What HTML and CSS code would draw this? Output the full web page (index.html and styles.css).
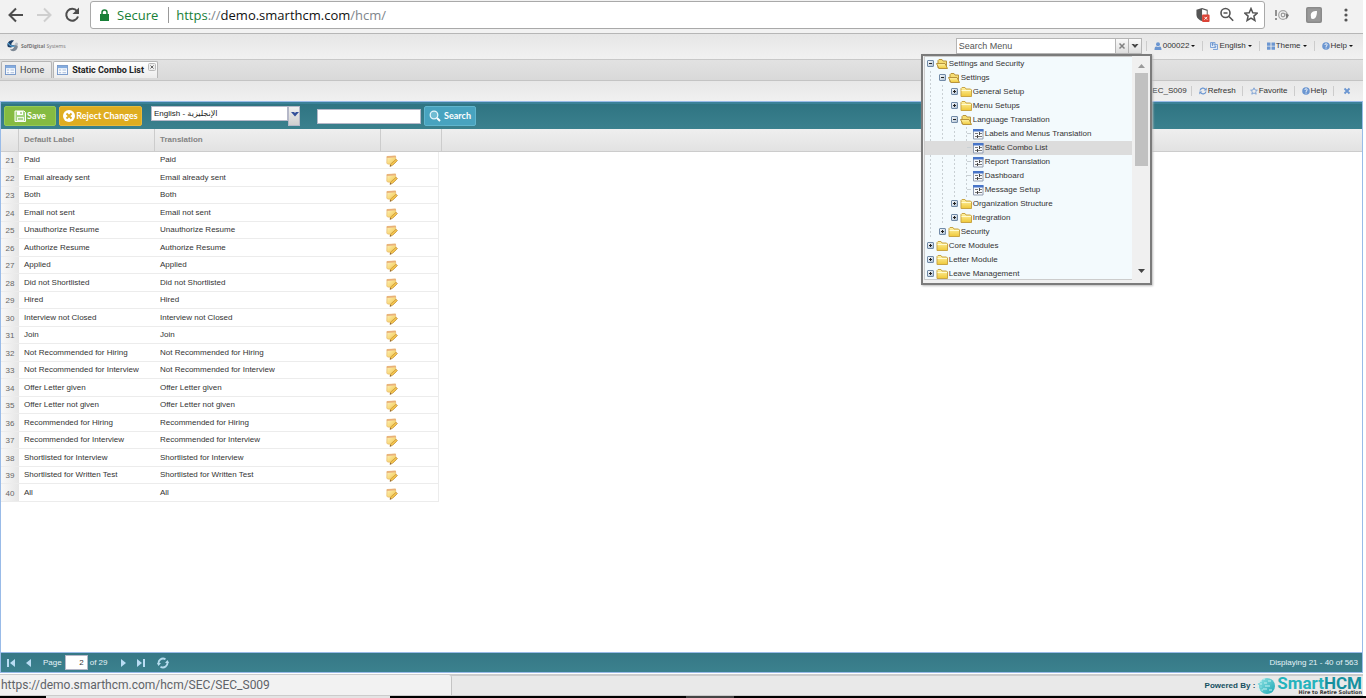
FILE: index.html
```html
<!DOCTYPE html>
<html lang="en">
<head>
<meta charset="utf-8">
<title>SmartHCM - Static Combo List</title>
<link rel="stylesheet" href="styles.css">
</head>
<body>
<svg class="sprite" aria-hidden="true">
  <defs>
    <linearGradient id="g-note" x1="0" y1="0" x2="1" y2="1"><stop offset="0" stop-color="#fdf3c0"/><stop offset="1" stop-color="#f4c645"/></linearGradient>
    <linearGradient id="g-folder" x1="0" y1="0" x2="0" y2="1"><stop offset="0" stop-color="#fff3a8"/><stop offset="1" stop-color="#efc838"/></linearGradient>
    <linearGradient id="g-toggle" x1="0" y1="0" x2="1" y2="1"><stop offset="0" stop-color="#fff"/><stop offset="1" stop-color="#a9bccf"/></linearGradient>
    <linearGradient id="g-globe" x1="0" y1="0" x2="1" y2="1"><stop offset="0" stop-color="#8fe3e3"/><stop offset="1" stop-color="#1aa5b4"/></linearGradient>
  </defs>
  <symbol id="edit" viewBox="0 0 12 12"><path d="M1 1.500 9.500 1 10 7 7 9.500 1.500 9 .8 8Z" fill="url(#g-note)" stroke="#e8b866" stroke-width=".7"/><path d="M.8 1.300 9.700 .8V2.300L.8 3Z" fill="#e9b07a"/><path d="M4 11.300 4.700 9 10 4.300 11.500 5.500 6.500 10.300Z" fill="#f5c64c" stroke="#b98534" stroke-width=".6"/><path d="M3.800 11.500 4.300 10 5.600 11Z" fill="#7a5525"/></symbol>
  <symbol id="folder" viewBox="0 0 12 12"><path d="M1 10.500V2.500L2 1.500H5L6 3H10.500L11.500 4V10.500Z" fill="url(#g-folder)" stroke="#c9a544"/><path d="M1.500 4.500H11" stroke="#fffbd0"/></symbol>
  <symbol id="folder-open" viewBox="0 0 12 12"><path d="M2 10V2.500L3 1.500H6L7 3H10.500V10Z" fill="#f5dc72" stroke="#b8943c"/><path d="M.5 5.500H9L11.500 10.500H3Z" fill="url(#g-folder)" stroke="#b8943c"/></symbol>
  <symbol id="leaf" viewBox="0 0 12 12"><path d="M1.500 1.500H11V11H1.500Z" fill="#f7f9fc" stroke="#8f9bb0"/><path d="M1 1H11.500V3.500H1Z" fill="#4774c8"/><path d="M3 5.500H6M7 5.500H10M3 8.500H5M6 8.500H10" stroke="#777"/><path d="M7.500 4V7M5.500 7V10" stroke="#444"/></symbol>
  <symbol id="minus" viewBox="0 0 9 9"><rect x="1.500" y="1.500" width="6" height="6" rx=".5" fill="url(#g-toggle)" stroke="#718aa7"/><path d="M3 4.500H6" stroke="#222"/></symbol>
  <symbol id="plus" viewBox="0 0 9 9"><rect x="1.500" y="1.500" width="6" height="6" rx=".5" fill="url(#g-toggle)" stroke="#718aa7"/><path d="M3 4.500H6M4.500 3V6" stroke="#222"/></symbol>
  <symbol id="window" viewBox="0 0 12 11"><rect x=".5" y=".5" width="11" height="10" fill="#f8fbff" stroke="#7295c9"/><path d="M1 1H11V3.500H1Z" fill="#84acdf"/><path d="M2 5.500H4.500M2 8.500H4.500M6 5.500H10M6 8.500H10" stroke="#9fb4d4"/></symbol>
  <symbol id="help" viewBox="0 0 8 8"><circle cx="4" cy="4" r="3.800" fill="#6b96d1"/><path d="M2.800 3C2.900 1.400 5.400 1.500 5.200 3 5.100 3.800 4 3.800 4 4.900M4 5.600V6.500" fill="none" stroke="#fff"/></symbol>
</svg>

<header class="browser">
  <button class="nav" aria-label="Back"><svg viewBox="0 0 16 16"><path d="M15 8H2M8 1.500 1.500 8 8 14.500" fill="none" stroke="#4d4d4d" stroke-width="2"/></svg></button>
  <button class="nav" aria-label="Forward"><svg viewBox="0 0 16 16"><path d="M1 8H14M8 1.500 14.500 8 8 14.500" fill="none" stroke="#cfcfcf" stroke-width="2"/></svg></button>
  <button class="nav" aria-label="Reload"><svg viewBox="0 0 16 16"><path d="M13 4A6 6 0 1 0 14 9.500" fill="none" stroke="#4d4d4d" stroke-width="2"/><path d="M15 .5V7H8.500Z" fill="#4d4d4d"/></svg></button>
  <div class="address">
    <svg class="lock" viewBox="0 0 9 12"><path d="M0 5H9V12H0Z" fill="#188038"/><path d="M2 6V3.500C2 .3 7 .3 7 3.500V6" fill="none" stroke="#188038" stroke-width="1.500"/></svg>
    <span class="secure">Secure</span>
    <span class="url"><span class="scheme">https</span>://<span class="host">demo.smarthcm.com</span>/hcm/</span>
    <span class="address-icons">
      <svg viewBox="0 0 14 16"><path d="M6 1 12 3V8C12 12 9 14 6 15 3 14 0 12 0 8V3Z" fill="#555"/><path d="M6 2.500 11 4V8C11 11 9 13 6 14Z" fill="#fff"/><rect x="6" y="8" width="8" height="8" rx="1" fill="#db4437"/><path d="M8.500 10.500 11.500 13.500M11.500 10.500 8.500 13.500" stroke="#fff"/></svg>
      <svg viewBox="0 0 14 14"><circle cx="5.500" cy="5.500" r="4.500" fill="none" stroke="#555" stroke-width="1.600"/><path d="M3.500 5.500H7.500M9 9 13.200 13.200" stroke="#555" stroke-width="1.600"/></svg>
      <svg viewBox="0 0 14 14"><path d="M7 1 8.800 5.200 13.300 5.600 9.900 8.600 10.900 13 7 10.600 3.100 13 4.100 8.600 .7 5.600 5.200 5.200Z" fill="none" stroke="#555" stroke-width="1.500"/></svg>
    </span>
  </div>
  <div class="extensions">
    <svg viewBox="0 0 16 16"><path d="M2 3V9M2 11V13" stroke="#888" stroke-width="1.800"/><circle cx="9" cy="8" r="4.300" fill="none" stroke="#a5a5a5" stroke-width="1.200"/><circle cx="9" cy="8" r="1.800" fill="none" stroke="#999" stroke-width="1.200"/><path d="M11.500 6 15 8 12.500 12.500Z" fill="#777"/></svg>
    <svg viewBox="0 0 16 16"><rect width="16" height="16" rx="2" fill="#8a8a8a"/><rect x="1.500" y="1.500" width="13" height="13" rx="1" fill="#999"/><path d="M5 10C4 5 7 4 11 4 11 8 10 12 7 12 5 12 5 11 5 10Z" fill="#fff"/></svg>
    <svg viewBox="0 0 16 16"><circle cx="8" cy="3" r="1.600" fill="#555"/><circle cx="8" cy="8" r="1.600" fill="#555"/><circle cx="8" cy="13" r="1.600" fill="#555"/></svg>
  </div>
</header>

<div class="app-header">
  <a class="brand" href="#"><svg viewBox="0 0 12 12"><path d="M7 .5C2-.5-1 4 1 7 4 8 7 7 7 5 4 6 3 4 7 .5Z" fill="#1d3e66"/><path d="M3 9C5 10 8 8 7 5 10 4 12 6 10 9 8 12 4 12 3 9Z" fill="#7d8894"/><path d="M1 3C3 6 5 7 8 6" fill="none" stroke="#539fd0" stroke-width="1.300"/><circle cx="9.500" cy="4" r="1.500" fill="#b8bfc8"/></svg><span><b>SofDigital</b> Systems</span></a>
  <div class="combo">
    <input class="combo-input" type="text" aria-label="Search Menu" placeholder="Search Menu">
    <button aria-label="Clear"><svg viewBox="0 0 10 10"><path d="M2.500 2.500 7.500 7.500M7.500 2.500 2.500 7.500" stroke="#808080" stroke-width="1.500"/></svg></button>
    <button aria-label="Open menu"><svg viewBox="0 0 10 10"><path d="M1.500 3H4L5 4 6 3H8.500L5 7Z" fill="#444"/></svg></button>
    <div class="popup">
      <nav class="tree">
        <ul>
          <li><a href="#"><svg class="tog"><use href="#minus"/></svg><svg class="ico"><use href="#folder-open"/></svg>Settings and Security</a>
            <ul>
              <li><a href="#"><svg class="tog"><use href="#minus"/></svg><svg class="ico"><use href="#folder-open"/></svg>Settings</a>
                <ul>
                  <li><a href="#"><svg class="tog"><use href="#plus"/></svg><svg class="ico"><use href="#folder"/></svg>General Setup</a></li>
                  <li><a href="#"><svg class="tog"><use href="#plus"/></svg><svg class="ico"><use href="#folder"/></svg>Menu Setups</a></li>
                  <li><a href="#"><svg class="tog"><use href="#minus"/></svg><svg class="ico"><use href="#folder-open"/></svg>Language Translation</a>
                    <ul>
                      <li><a href="#"><span class="branch"></span><svg class="ico"><use href="#leaf"/></svg>Labels and Menus Translation</a></li>
                      <li><a class="selected" href="#"><span class="branch"></span><svg class="ico"><use href="#leaf"/></svg>Static Combo List</a></li>
                      <li><a href="#"><span class="branch"></span><svg class="ico"><use href="#leaf"/></svg>Report Translation</a></li>
                      <li><a href="#"><span class="branch"></span><svg class="ico"><use href="#leaf"/></svg>Dashboard</a></li>
                      <li><a href="#"><span class="branch"></span><svg class="ico"><use href="#leaf"/></svg>Message Setup</a></li>
                    </ul>
                  </li>
                  <li><a href="#"><svg class="tog"><use href="#plus"/></svg><svg class="ico"><use href="#folder"/></svg>Organization Structure</a></li>
                  <li><a href="#"><svg class="tog"><use href="#plus"/></svg><svg class="ico"><use href="#folder"/></svg>Integration</a></li>
                </ul>
              </li>
              <li><a href="#"><svg class="tog"><use href="#plus"/></svg><svg class="ico"><use href="#folder"/></svg>Security</a></li>
            </ul>
          </li>
          <li><a href="#"><svg class="tog"><use href="#plus"/></svg><svg class="ico"><use href="#folder"/></svg>Core Modules</a></li>
          <li><a href="#"><svg class="tog"><use href="#plus"/></svg><svg class="ico"><use href="#folder"/></svg>Letter Module</a></li>
          <li><a href="#"><svg class="tog"><use href="#plus"/></svg><svg class="ico"><use href="#folder"/></svg>Leave Management</a></li>
        </ul>
      </nav>
      <div class="scrollbar" aria-hidden="true">
        <svg viewBox="0 0 13 16"><path d="M3 11 6.500 7 10 11Z" fill="#9a9a9a"/></svg>
        <span class="thumb"></span>
        <svg class="down" viewBox="0 0 13 16"><path d="M3 5 6.500 9 10 5Z" fill="#444"/></svg>
      </div>
    </div>
  </div>
  <div class="links">
    <button class="caret"><svg viewBox="0 0 8 8"><circle cx="4" cy="2.200" r="2" fill="#6b96d1"/><path d="M.5 8C.5 4 2 4 4 5 6 4 7.500 4 7.500 8Z" fill="#6b96d1"/></svg>000022</button>
    <button class="caret"><svg viewBox="0 0 8 8"><path d="M.5.500H5V5.500H.5ZM4 2.500H7.500V7.500H3" fill="#dce8f7" stroke="#7fa5d8"/><path d="M1.500 2H4M2.500 1V4M5 6 6 4" stroke="#557fbc" stroke-width=".7"/></svg>English</button>
    <button class="caret"><svg viewBox="0 0 8 8"><path d="M0 .5H3.500V3.700H0ZM4.500 .5H8V3.700H4.500ZM0 4.500H3.500V7.700H0ZM4.500 4.500H8V7.700H4.500Z" fill="#6b96d1"/></svg>Theme</button>
    <button class="caret"><svg><use href="#help"/></svg>Help</button>
  </div>
</div>

<nav class="tabs">
  <a class="tab" href="#"><svg><use href="#window"/></svg>Home</a>
  <a class="tab active" href="#"><svg><use href="#window"/></svg>Static Combo List<svg class="close" viewBox="0 0 8 8"><rect x=".5" y=".5" width="7" height="7" rx="1" fill="#eee" stroke="#bbb"/><path d="M2.500 2.500 5.500 5.500M5.500 2.500 2.500 5.500" stroke="#666"/></svg></a>
</nav>

<div class="page-tools links">
  <span>SEC_S009</span>
  <button><svg viewBox="0 0 8 8"><path d="M1 3.500A3 3 0 0 1 6.500 2.500M7 4.500A3 3 0 0 1 1.500 5.500" fill="none" stroke="#6b96d1" stroke-width="1.200"/><path d="M7.700 .5V3.500H4.700ZM.3 7.500V4.500H3.300Z" fill="#6b96d1"/></svg>Refresh</button>
  <button><svg viewBox="0 0 8 8"><path d="M4 .8 5 3 7.400 3.200 5.600 4.800 6.200 7.200 4 6 1.800 7.200 2.400 4.800 .6 3.200 3 3Z" fill="none" stroke="#6b96d1" stroke-width=".8"/></svg>Favorite</button>
  <button><svg><use href="#help"/></svg>Help</button>
  <button class="shut" aria-label="Close"><svg viewBox="0 0 8 8"><path d="M1.500 1.500 6.500 6.500M6.500 1.500 1.500 6.500" stroke="#6b96d1" stroke-width="1.800"/></svg></button>
</div>

<main class="panel">
  <div class="toolbar">
    <button class="btn save"><svg viewBox="0 0 12 12"><path d="M1 1H10L11.500 2.500V11.500H1Z" fill="#a4d67f" stroke="#fff"/><path d="M3 1H9V5H3Z" fill="#fff"/><path d="M3 7H10V11.500H3Z" fill="#eef9e6"/><path d="M7 2V4M4 9H9" stroke="#6cab43"/></svg>Save</button>
    <button class="btn reject"><svg viewBox="0 0 12 12"><circle cx="6" cy="6" r="6" fill="#fff"/><path d="M3.500 3.500 8.500 8.500M8.500 3.500 3.500 8.500" stroke="#dfad20" stroke-width="1.800"/></svg>Reject Changes</button>
    <div class="lang">
      <select aria-label="Language"><option>English - الإنجليزية</option></select>
      <span class="lang-arrow"><svg viewBox="0 0 8 6"><path d="M0 0H3L4 1 5 0H8L4 4.500Z" fill="#34509a"/></svg></span>
    </div>
    <input class="query" type="text" aria-label="Search text">
    <button class="btn search"><svg viewBox="0 0 12 12"><circle cx="5" cy="5" r="3.800" fill="#70bcd2" stroke="#e5f6fb" stroke-width="1.300"/><path d="M8 8 11 11" stroke="#fff" stroke-width="2"/></svg>Search</button>
  </div>

  <div class="grid">
    <table>
      <thead><tr><th class="num"></th><th class="text">Default Label</th><th class="wide">Translation</th><th class="act"></th><th></th></tr></thead>
      <tbody>
        <tr><td>21</td><td>Paid</td><td>Paid</td><td><svg><use href="#edit"/></svg></td></tr>
        <tr><td>22</td><td>Email already sent</td><td>Email already sent</td><td><svg><use href="#edit"/></svg></td></tr>
        <tr><td>23</td><td>Both</td><td>Both</td><td><svg><use href="#edit"/></svg></td></tr>
        <tr><td>24</td><td>Email not sent</td><td>Email not sent</td><td><svg><use href="#edit"/></svg></td></tr>
        <tr><td>25</td><td>Unauthorize Resume</td><td>Unauthorize Resume</td><td><svg><use href="#edit"/></svg></td></tr>
        <tr><td>26</td><td>Authorize Resume</td><td>Authorize Resume</td><td><svg><use href="#edit"/></svg></td></tr>
        <tr><td>27</td><td>Applied</td><td>Applied</td><td><svg><use href="#edit"/></svg></td></tr>
        <tr><td>28</td><td>Did not Shortlisted</td><td>Did not Shortlisted</td><td><svg><use href="#edit"/></svg></td></tr>
        <tr><td>29</td><td>Hired</td><td>Hired</td><td><svg><use href="#edit"/></svg></td></tr>
        <tr><td>30</td><td>Interview not Closed</td><td>Interview not Closed</td><td><svg><use href="#edit"/></svg></td></tr>
        <tr><td>31</td><td>Join</td><td>Join</td><td><svg><use href="#edit"/></svg></td></tr>
        <tr><td>32</td><td>Not Recommended for Hiring</td><td>Not Recommended for Hiring</td><td><svg><use href="#edit"/></svg></td></tr>
        <tr><td>33</td><td>Not Recommended for Interview</td><td>Not Recommended for Interview</td><td><svg><use href="#edit"/></svg></td></tr>
        <tr><td>34</td><td>Offer Letter given</td><td>Offer Letter given</td><td><svg><use href="#edit"/></svg></td></tr>
        <tr><td>35</td><td>Offer Letter not given</td><td>Offer Letter not given</td><td><svg><use href="#edit"/></svg></td></tr>
        <tr><td>36</td><td>Recommended for Hiring</td><td>Recommended for Hiring</td><td><svg><use href="#edit"/></svg></td></tr>
        <tr><td>37</td><td>Recommended for Interview</td><td>Recommended for Interview</td><td><svg><use href="#edit"/></svg></td></tr>
        <tr><td>38</td><td>Shortlisted for Interview</td><td>Shortlisted for Interview</td><td><svg><use href="#edit"/></svg></td></tr>
        <tr><td>39</td><td>Shortlisted for Written Test</td><td>Shortlisted for Written Test</td><td><svg><use href="#edit"/></svg></td></tr>
        <tr><td>40</td><td>All</td><td>All</td><td><svg><use href="#edit"/></svg></td></tr>
      </tbody>
    </table>
  </div>

  <div class="pager">
    <button aria-label="First page"><svg viewBox="0 0 10 10"><path d="M1 1H3V9H1ZM9 1V9L4 5Z" fill="#b9dcf3"/></svg></button>
    <button aria-label="Previous page"><svg viewBox="0 0 10 10"><path d="M7 1V9L2 5Z" fill="#b9dcf3"/></svg></button>
    <label class="page-box">Page <input type="text" value="2"></label>
    <span>of 29</span>
    <button class="next" aria-label="Next page"><svg viewBox="0 0 10 10"><path d="M3 1V9L8 5Z" fill="#b9dcf3"/></svg></button>
    <button aria-label="Last page"><svg viewBox="0 0 10 10"><path d="M7 1H9V9H7ZM1 1V9L6 5Z" fill="#b9dcf3"/></svg></button>
    <button class="reload" aria-label="Reload grid"><svg viewBox="0 0 12 12"><path d="M1.800 7.500A4.500 4.500 0 0 1 8.500 2.300M10.200 4.500A4.500 4.500 0 0 1 3.500 9.700" fill="none" stroke="#b5dcee" stroke-width="1.800"/><path d="M8 6H12L10.500 3ZM4 6H0L1.500 9Z" fill="#b5dcee"/></svg></button>
    <span class="total">Displaying 21 - 40 of 563</span>
  </div>
</main>

<footer class="footer">
  <div class="status">https://demo.smarthcm.com/hcm/SEC/SEC_S009</div>
  <div class="powered">Powered By :
    <svg viewBox="0 0 18 18"><circle cx="10" cy="9" r="8" fill="url(#g-globe)"/><path d="M1 4H5M0 7H5M0 10H5M1 13H6M7 1V3M7 6H10M11 4H14M8 9H13M6 12H10M12 13H15" stroke="#c5f2f2" stroke-width="1.200"/><path d="M1 7H3M2 10H5M3 13H5" stroke="#55c8cf"/></svg>
    <span class="logo"><span class="name">Smart<b>HCM</b></span><span class="tagline">Hire to Retire Solution</span></span>
  </div>
</footer>
<div class="taskbar"><span class="light"></span><span class="dark"></span><span class="mid"></span></div>
</body>
</html>
```

FILE: styles.css
```css
* { box-sizing: border-box; }
body {
  margin: 0;
  height: 100vh;
  padding-right: 3px;
  display: flex;
  flex-direction: column;
  font: 8px/12px "Liberation Sans", Arial, sans-serif;
  color: #333;
  background: #fff;
}
.sprite { position: absolute; width: 0; height: 0; }
svg { display: block; flex: none; }
button { border: 0; padding: 0; background: none; font: inherit; color: inherit; }
input { font: inherit; color: inherit; border-radius: 0; }
a { color: inherit; text-decoration: none; }
ul { list-style: none; margin: 0; padding: 0; }

/* Browser bar */
.browser {
  display: flex;
  align-items: center;
  gap: 12px;
  height: 34px;
  padding: 0 9px 4px 8px;
  background: #f2f2f2;
  border-bottom: 1px solid #b6b6b6;
  flex: none;
}
.nav svg { width: 16px; height: 16px; }
.address {
  flex: 1;
  display: flex;
  align-items: center;
  height: 28px;
  margin: 0 -3px 0 -2px;
  padding: 0 6px 0 9px;
  border: 1px solid #a9a9a9;
  border-radius: 3px;
  background: #fff;
  font: 13px/24px "Open Sans", "Noto Sans", sans-serif;
}
.lock { width: 9px; height: 12px; margin-right: 8px; }
.secure { color: #188038; padding-right: 10px; margin-right: 7px; line-height: 16px; border-right: 1px solid #999; }
.url { color: #80868b; }
.scheme { color: #188038; }
.host { color: #111; }
.address-icons { margin-left: auto; display: flex; align-items: center; gap: 10px; }
.address-icons svg { width: 14px; height: 15px; }
.extensions { display: flex; gap: 16px; }
.extensions svg { width: 16px; height: 16px; }

/* Application header */
.app-header {
  display: flex;
  align-items: center;
  height: 26px;
  padding: 0 3px 2px 7px;
  background: linear-gradient(#e6e6e6, #f1f1f1);
  border-bottom: 1px solid #c8c8c8;
  flex: none;
}
.brand { display: flex; align-items: center; gap: 2px; margin-right: auto; font: 5px/12px "Open Sans", sans-serif; color: #777; }
.brand svg { width: 12px; height: 12px; }
.combo { position: relative; display: flex; width: 186px; height: 16px; margin-right: 4px; }
.combo-input { flex: 1; min-width: 0; border: 1px solid #b5b5b5; padding: 0 2px; font-size: 9px; background: #fff; }
.combo-input::placeholder { color: #555; opacity: 1; }
.combo button { width: 13px; display: grid; place-items: center; background: linear-gradient(#fafafa, #dedede); border: 1px solid #b5b5b5; border-left: 0; }
.combo button svg { width: 10px; height: 10px; }

.links { display: flex; align-items: center; color: #333; }
.links button { display: flex; align-items: center; height: 10px; gap: 1px; padding: 0 6px 0 7px; border-left: 1px solid #ccc; line-height: 10px; }
.links .caret { padding-right: 7px; }
.links svg { width: 8px; height: 8px; }
.caret::after { content: ""; margin-left: 1px; border: 2px solid transparent; border-top-color: #111; border-bottom: 0; }

/* Menu tree popup */
.popup {
  position: absolute;
  z-index: 5;
  left: -35px;
  top: 16px;
  width: 231px;
  height: 231px;
  display: flex;
  padding: 0 2px 3px 1px;
  border: 2px solid #7b7b7b;
  background: #f0f0f0;
  box-shadow: 1px 1px 2px #bbb;
}
.tree { flex: 1; overflow: hidden; border: 1px solid #ccc; border-right: 0; background: #f3fafd; margin-right: 3px; }
.tree a { display: flex; align-items: center; height: 14px; padding-left: 1px; line-height: 14px; white-space: nowrap; }
.tog { width: 9px; height: 9px; margin-right: 1px; }
.ico { width: 12px; height: 12px; margin-right: 1px; }
.branch { width: 10px; height: 1px; background: linear-gradient(90deg, transparent 5px, #c9d0d4 5px 9px, transparent 9px); }
.tree ul ul { background: repeating-linear-gradient(#c9d0d4 0 2px, transparent 2px 4px) 5px 0 / 1px 100% no-repeat; }
.tree ul ul a { padding-left: 13px; }
.tree ul ul ul { background-position-x: 17px; }
.tree ul ul ul a { padding-left: 25px; }
.tree ul ul ul ul { background: repeating-linear-gradient(#c9d0d4 0 2px, transparent 2px 4px) 29px 0 / 1px 100% no-repeat, repeating-linear-gradient(#c9d0d4 0 2px, transparent 2px 4px) 41px 0 / 1px 100% no-repeat; }
.tree ul ul ul ul a { padding-left: 37px; }
.tree .selected { background: #dcdcdc; }
.scrollbar { width: 13px; display: flex; flex-direction: column; padding-top: 1px; }
.scrollbar svg { width: 13px; height: 16px; }
.thumb { height: 93px; background: #c1c1c1; }
.scrollbar .down { margin-top: auto; }

/* Tabs */
.tabs { display: flex; gap: 1px; height: 21px; padding: 1px 0 2px 1px; background: linear-gradient(#e2e2e2, #d9d9d9); border-bottom: 1px solid #c4c4c4; flex: none; }
.tab { display: flex; align-items: center; gap: 4px; padding: 0 7px 0 3px; border: 1px solid #b5b5b5; border-bottom: 0; border-radius: 2px 2px 0 0; background: linear-gradient(#eee, #e2e2e2); font: 9px/14px Roboto, "Noto Sans", sans-serif; color: #444; }
.tab svg { width: 11px; height: 10px; }
.tab.active { background: linear-gradient(#fff, #ececec); color: #222; font-weight: 700; padding-right: 1px; }
.tab .close { width: 8px; height: 8px; align-self: flex-start; margin-top: 1px; }
.page-tools { height: 20px; justify-content: flex-end; padding-right: 6px; background: linear-gradient(#e8e8e8, #f0f0f0); flex: none; }
.page-tools span { padding-right: 4px; }
.page-tools .shut { padding-left: 9px; }

/* Grid panel */
.panel { flex: 1; min-height: 0; display: flex; flex-direction: column; border: 1px solid #99bbe8; background: #fff; }
.toolbar { display: flex; align-items: center; height: 27px; padding: 0 3px 1px; gap: 3px; background: linear-gradient(#2f7482, #3b818e); border-top: 2px solid #3b8199; flex: none; }
.btn { display: flex; align-items: center; justify-content: center; height: 20px; border-radius: 2px; color: #fff; font: 700 9px/12px Lato, sans-serif; white-space: nowrap; }
.btn svg { width: 12px; height: 12px; margin-right: 1px; }
.save { width: 52px; background: #85bb42; border: 1px solid #95ca57; }
.reject { width: 83px; background: #dfad20; border: 1px solid #e9ba3a; }
.search { width: 52px; background: #48a3bf; border: 1px solid #60b5cd; }
.search svg { margin-right: 3px; }
.lang { display: flex; align-items: flex-start; margin: 0 14px 0 6px; height: 20px; }
.lang select { appearance: none; width: 137px; height: 15px; padding: 0 2px; border: 1px solid #b5b8c8; border-radius: 0; background: #fff; color: #222; font: 8px/12px "Liberation Sans", "DejaVu Sans", sans-serif; }
.lang-arrow { width: 12px; height: 20px; padding: 5px 0 0 2px; border: 1px solid #b5b8c8; background: linear-gradient(#f0f0f0, #cfcfcf); }
.lang-arrow svg { width: 8px; height: 6px; }
.query { width: 104px; height: 15px; border: 1px solid #b5b8c8; background: #fff; }
.grid { flex: 1; min-height: 0; overflow: hidden; }
table { width: 100%; table-layout: fixed; border-collapse: separate; border-spacing: 0; }
th { height: 23px; padding: 0 5px; text-align: left; color: #848484; background: linear-gradient(#efefef, #e2e2e2); border-right: 1px solid #ccc; border-bottom: 1px solid #ccc; }
th:last-child { border-right: 0; }
.num { width: 18px; }
.text { width: 136px; }
.wide { width: 226px; }
.act { width: 61px; }
td { height: 17px; padding: 0 5px; border-bottom: 1px solid #ececec; line-height: 12px; white-space: nowrap; color: #333; }
tr:nth-child(even) td { height: 18px; }
td:first-child { padding: 2px 0 0; text-align: center; color: #666; background: linear-gradient(90deg, #f8f8f8, #e6e6e6); }
td:nth-child(4) {
  border-bottom: 0;
  background:
    linear-gradient(#ececec, #ececec) 57px 0 / 1px 100% no-repeat,
    linear-gradient(#ececec, #ececec) 0 100% / 58px 1px no-repeat;
}
td svg { width: 12px; height: 12px; margin-top: 1px; }

/* Paging bar */
.pager { display: flex; align-items: center; height: 20px; padding: 0 4px 0 5px; gap: 8px; color: #e5f3f8; background: linear-gradient(#367886, #3b818e); border-top: 1px solid #99bbe8; flex: none; }
.pager svg { width: 10px; height: 10px; }
.page-box { display: flex; align-items: center; gap: 3px; margin: 0 -6px 0 1px; }
.page-box input { width: 23px; height: 15px; padding: 0 3px; text-align: right; border: 1px solid #b5b8c8; background: #fff; color: #333; }
.pager .next { margin-left: 3px; }
.pager .reload { margin-left: 3px; }
.pager .reload svg { width: 12px; height: 12px; }
.total { margin-left: auto; }

/* Footer */
.footer { display: flex; height: 22px; margin-top: 1px; background: #e9e9e9; border-top: 2px solid #ccc; border-bottom: 1px solid #ccc; flex: none; }
.status { width: 452px; padding-left: 1px; margin-top: -1px; background: #f2f2f2; border-right: 1px solid #c4c4c4; border-top-right-radius: 3px; font: 12px/21px Roboto, "Noto Sans", sans-serif; color: #5f6368; }
.powered { display: flex; align-items: center; gap: 2px; margin-left: auto; padding-right: 1px; font-weight: 700; color: #15505f; }
.powered svg { width: 18px; height: 18px; }
.logo { display: flex; flex-direction: column; align-items: flex-end; }
.name { font: 700 17px/14px Roboto, sans-serif; color: #25b3bd; }
.name b { color: #15909f; font-weight: 700; }
.tagline { font: 700 5px/5px "DejaVu Sans", sans-serif; color: #333; }
.taskbar { display: flex; height: 2px; margin-right: -3px; background: #000; flex: none; }
.light { margin-left: 46px; width: 344px; background: #e4e4e4; }
.dark { width: 296px; }
.mid { width: 48px; background: #444; }
```
